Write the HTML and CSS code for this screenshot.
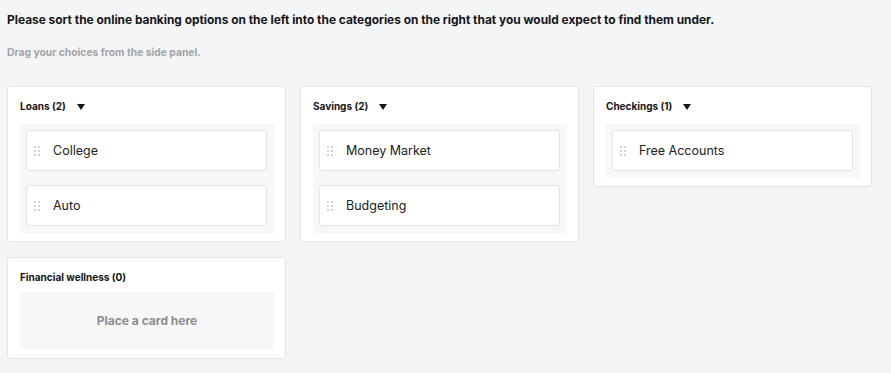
FILE: index.html
```html
<!DOCTYPE html>
<html>
<head>
<meta charset="utf-8">
<link rel="stylesheet" href="styles.css">
</head>
<body>
<div class="page">
  <h1 class="title">Please sort the online banking options on the left into the categories on the right that you would expect to find them under.</h1>
  <p class="subtitle">Drag your choices from the side panel.</p>
  <div class="grid">
    <section class="group">
      <div class="group-head"><span>Loans (2)</span><span class="caret"></span></div>
      <div class="zone">
        <div class="item"><svg class="handle" viewBox="0 0 6 10" width="6" height="10"><circle cx="1" cy="1" r="0.9"/><circle cx="5" cy="1" r="0.9"/><circle cx="1" cy="5" r="0.9"/><circle cx="5" cy="5" r="0.9"/><circle cx="1" cy="9" r="0.9"/><circle cx="5" cy="9" r="0.9"/></svg><span>College</span></div>
        <div class="item"><svg class="handle" viewBox="0 0 6 10" width="6" height="10"><circle cx="1" cy="1" r="0.9"/><circle cx="5" cy="1" r="0.9"/><circle cx="1" cy="5" r="0.9"/><circle cx="5" cy="5" r="0.9"/><circle cx="1" cy="9" r="0.9"/><circle cx="5" cy="9" r="0.9"/></svg><span>Auto</span></div>
      </div>
    </section>
    <section class="group">
      <div class="group-head"><span>Savings (2)</span><span class="caret"></span></div>
      <div class="zone">
        <div class="item"><svg class="handle" viewBox="0 0 6 10" width="6" height="10"><circle cx="1" cy="1" r="0.9"/><circle cx="5" cy="1" r="0.9"/><circle cx="1" cy="5" r="0.9"/><circle cx="5" cy="5" r="0.9"/><circle cx="1" cy="9" r="0.9"/><circle cx="5" cy="9" r="0.9"/></svg><span>Money Market</span></div>
        <div class="item"><svg class="handle" viewBox="0 0 6 10" width="6" height="10"><circle cx="1" cy="1" r="0.9"/><circle cx="5" cy="1" r="0.9"/><circle cx="1" cy="5" r="0.9"/><circle cx="5" cy="5" r="0.9"/><circle cx="1" cy="9" r="0.9"/><circle cx="5" cy="9" r="0.9"/></svg><span>Budgeting</span></div>
      </div>
    </section>
    <section class="group">
      <div class="group-head"><span>Checkings (1)</span><span class="caret"></span></div>
      <div class="zone">
        <div class="item"><svg class="handle" viewBox="0 0 6 10" width="6" height="10"><circle cx="1" cy="1" r="0.9"/><circle cx="5" cy="1" r="0.9"/><circle cx="1" cy="5" r="0.9"/><circle cx="5" cy="5" r="0.9"/><circle cx="1" cy="9" r="0.9"/><circle cx="5" cy="9" r="0.9"/></svg><span>Free Accounts</span></div>
      </div>
    </section>
    <section class="group group-empty">
      <div class="group-head plain"><span>Financial wellness (0)</span></div>
      <div class="zone empty">Place a card here</div>
    </section>
  </div>
</div>
</body>
</html>
```

FILE: styles.css
```css
html, body {
  margin: 0;
  padding: 0;
  background: #f4f5f7;
}
body {
  font-family: "Inter", "Lato", "Liberation Sans", sans-serif;
  color: #1a1a1a;
}
.page {
  padding: 13px 7px 0 7px;
}
.title {
  margin: 0;
  font-size: 11.9px;
  font-weight: 700;
  line-height: 14px;
  color: #151517;
}
.subtitle {
  margin: 19px 0 0 0;
  font-size: 10.3px;
  font-weight: 700;
  line-height: 12px;
  color: #a3a4a8;
}
.grid {
  margin-top: 28px;
  display: grid;
  grid-template-columns: repeat(3, 279px);
  column-gap: 14px;
  row-gap: 15px;
  align-items: start;
}
.group {
  background: #fff;
  border: 1px solid #e3e4e8;
  border-radius: 3px;
  padding: 12px 11px 8px 12px;
}
.group-empty {
  padding-bottom: 9px;
}
.group-head {
  display: flex;
  align-items: center;
  gap: 11px;
  height: 14px;
  font-size: 10px;
  font-weight: 700;
  color: #151517;
  margin-bottom: 11px;
}
.group-head.plain {
  margin-bottom: 8px;
}
.caret {
  width: 0;
  height: 0;
  border-left: 4.5px solid transparent;
  border-right: 4.5px solid transparent;
  border-top: 6.5px solid #151517;
  margin-top: 2px;
}
.zone {
  background: #f7f7f8;
  padding: 6px 7px 7px 6px;
  display: flex;
  flex-direction: column;
  gap: 14px;
}
.item {
  background: #fff;
  border: 1px solid #e2e3e6;
  border-radius: 3px;
  height: 39px;
  display: flex;
  align-items: center;
  font-size: 12.5px;
  color: #222;
}
.handle {
  flex: none;
  margin-left: 7px;
  margin-right: 13px;
  fill: #bdbec2;
}
.zone.empty {
  height: 57px;
  padding: 0;
  align-items: center;
  justify-content: center;
  font-size: 12px;
  font-weight: 700;
  color: #8c8d91;
}
```
